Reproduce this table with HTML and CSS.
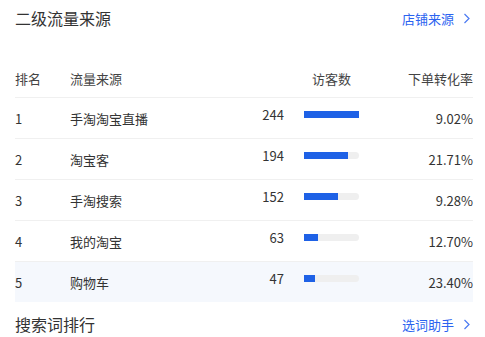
FILE: index.html
```html
<!DOCTYPE html>
<html lang="zh-CN">
<head>
<meta charset="utf-8">
<link rel="stylesheet" href="styles.css">
</head>
<body>
<div class="panel">
  <div class="section-head">
    <h2 class="title">二级流量来源</h2>
    <a class="more">店铺来源<svg class="chev" width="7" height="11" viewBox="0 0 7 11"><polyline points="1.5,1 6,5.5 1.5,10" fill="none" stroke="currentColor" stroke-width="1.2"/></svg></a>
  </div>
  <div class="table">
    <div class="row head">
      <span>排名</span>
      <span>流量来源</span>
      <span></span>
      <span class="c-visit">访客数</span>
      <span class="num-r">下单转化率</span>
    </div>
    <div class="row">
      <span>1</span><span>手淘淘宝直播</span><span class="num up">244</span>
      <span class="track up"><span class="fill" style="width:100%"></span></span><span class="num-r">9.02%</span>
    </div>
    <div class="row">
      <span>2</span><span>淘宝客</span><span class="num up">194</span>
      <span class="track up"><span class="fill" style="width:79.5%"></span></span><span class="num-r">21.71%</span>
    </div>
    <div class="row">
      <span>3</span><span>手淘搜索</span><span class="num up">152</span>
      <span class="track up"><span class="fill" style="width:62.3%"></span></span><span class="num-r">9.28%</span>
    </div>
    <div class="row">
      <span>4</span><span>我的淘宝</span><span class="num up">63</span>
      <span class="track up"><span class="fill" style="width:25.8%"></span></span><span class="num-r">12.70%</span>
    </div>
    <div class="row hl">
      <span>5</span><span>购物车</span><span class="num up">47</span>
      <span class="track up"><span class="fill" style="width:19.3%"></span></span><span class="num-r">23.40%</span>
    </div>
  </div>
  <div class="section-head bottom">
    <h2 class="title">搜索词排行</h2>
    <a class="more">选词助手<svg class="chev" width="7" height="11" viewBox="0 0 7 11"><polyline points="1.5,1 6,5.5 1.5,10" fill="none" stroke="currentColor" stroke-width="1.2"/></svg></a>
  </div>
</div>
</body>
</html>
```

FILE: styles.css
```css
html, body {
  margin: 0;
  padding: 0;
  background: #fff;
}
body {
  font-family: "Noto Sans CJK SC", "Noto Sans", sans-serif;
  color: #333;
  width: 485px;
  height: 337px;
  overflow: hidden;
}
.panel {
  padding: 0 12px 0 15px;
}
.section-head {
  display: flex;
  align-items: center;
  justify-content: space-between;
  height: 36px;
}
.title {
  margin: 0;
  font-size: 16px;
  font-weight: 400;
  color: #333;
  line-height: 20px;
}
.more {
  display: flex;
  align-items: center;
  gap: 9px;
  font-size: 13px;
  color: #2b63f0;
  padding-right: 3px;
}
.chev {
  color: #4b7af2;
}
.table {
  margin-top: 24px;
}
.row {
  display: grid;
  grid-template-columns: 55px 144px 70px 75px 114px;
  align-items: center;
  height: 40px;
  border-bottom: 1px solid #f0f0f0;
  font-size: 13px;
  color: #333;
}
.row > span:nth-child(3) {
  text-align: right;
}
.row > span:nth-child(4) {
  margin-left: 20px;
}
.row.head {
  height: 37px;
  color: #444;
}
.row.hl {
  background: #f5f8fd;
  border-bottom: none;
}
.c-visit {
  text-align: center;
  width: 55px;
}
.num-r {
  text-align: right;
}
.up {
  margin-bottom: 7px;
}
.track {
  display: block;
  width: 55px;
  height: 7px;
  background: #efefef;
  border-radius: 0 4px 4px 0;
}
.fill {
  display: block;
  height: 100%;
  background: #1e61e6;
}
.section-head.bottom {
  height: 44px;
}
```
